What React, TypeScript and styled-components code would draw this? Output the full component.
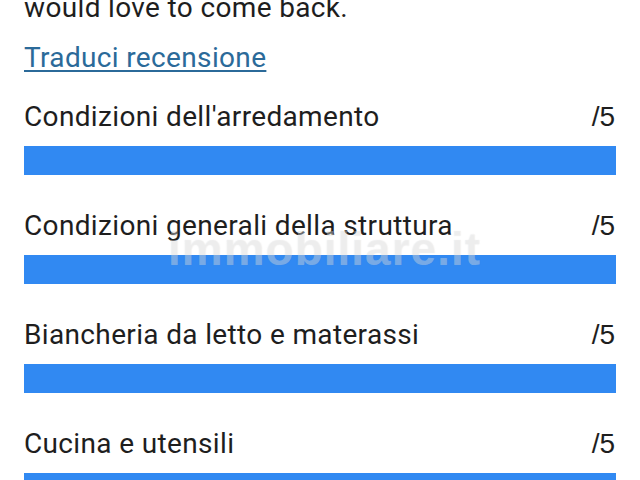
import React from "react";
import styled, { createGlobalStyle } from "styled-components";

const Global = createGlobalStyle`
  html, body { margin: 0; padding: 0; background: #ffffff; }
  body { font-family: Roboto, "Noto Sans", sans-serif; color: #1f1f1f; }
`;

const Page = styled.div`
  position: relative;
  display: flex;
  flex-direction: column;
  width: 640px;
  height: 480px;
  overflow: hidden;
  padding: 0 24px;
  box-sizing: border-box;
  background: #ffffff;
  letter-spacing: 0.35px;
`;

const ReviewTail = styled.p`
  margin: -8px 0 0;
  font-size: 28px;
  line-height: 32px;
  color: #1e1e1e;
`;

const TranslateLink = styled.a`
  align-self: flex-start;
  margin-top: 18px;
  font-size: 28px;
  line-height: 32px;
  color: #2b6a99;
  text-decoration: underline;
  text-decoration-thickness: 2px;
  text-underline-offset: 3px;
`;

const Ratings = styled.div`
  display: flex;
  flex-direction: column;
  gap: 35px;
  margin-top: 27px;
`;

const Rating = styled.div`
  display: flex;
  flex-direction: column;
  gap: 13px;
`;

const RatingHead = styled.div`
  display: flex;
  justify-content: space-between;
  align-items: baseline;
  font-size: 28px;
  line-height: 32px;
  color: #1e1e1e;
  padding-right: 1px;
`;

const Score = styled.span`
  font-family: "Liberation Sans", Arial, sans-serif;
  font-size: 28px;
  letter-spacing: 0;
`;

const Bar = styled.div`
  height: 29px;
  background: #3189f2;
`;

const Watermark = styled.div`
  position: absolute;
  left: 168px;
  top: 222px;
  font-family: "Liberation Sans", Arial, sans-serif;
  font-weight: 700;
  font-size: 46px;
  letter-spacing: 1px;
  color: rgba(255, 255, 255, 0.3);
  text-shadow: 0 0 1px rgba(140, 140, 140, 0.22);
  pointer-events: none;
`;

const items = [
  "Condizioni dell'arredamento",
  "Condizioni generali della struttura",
  "Biancheria da letto e materassi",
  "Cucina e utensili",
];

export default function App() {
  return (
    <>
      <Global />
      <Page>
        <ReviewTail>would love to come back.</ReviewTail>
        <TranslateLink href="#">Traduci recensione</TranslateLink>
        <Ratings>
          {items.map((label) => (
            <Rating key={label}>
              <RatingHead>
                <span>{label}</span>
                <Score>/5</Score>
              </RatingHead>
              <Bar />
            </Rating>
          ))}
        </Ratings>
        <Watermark>immobiliare.it</Watermark>
      </Page>
    </>
  );
}
